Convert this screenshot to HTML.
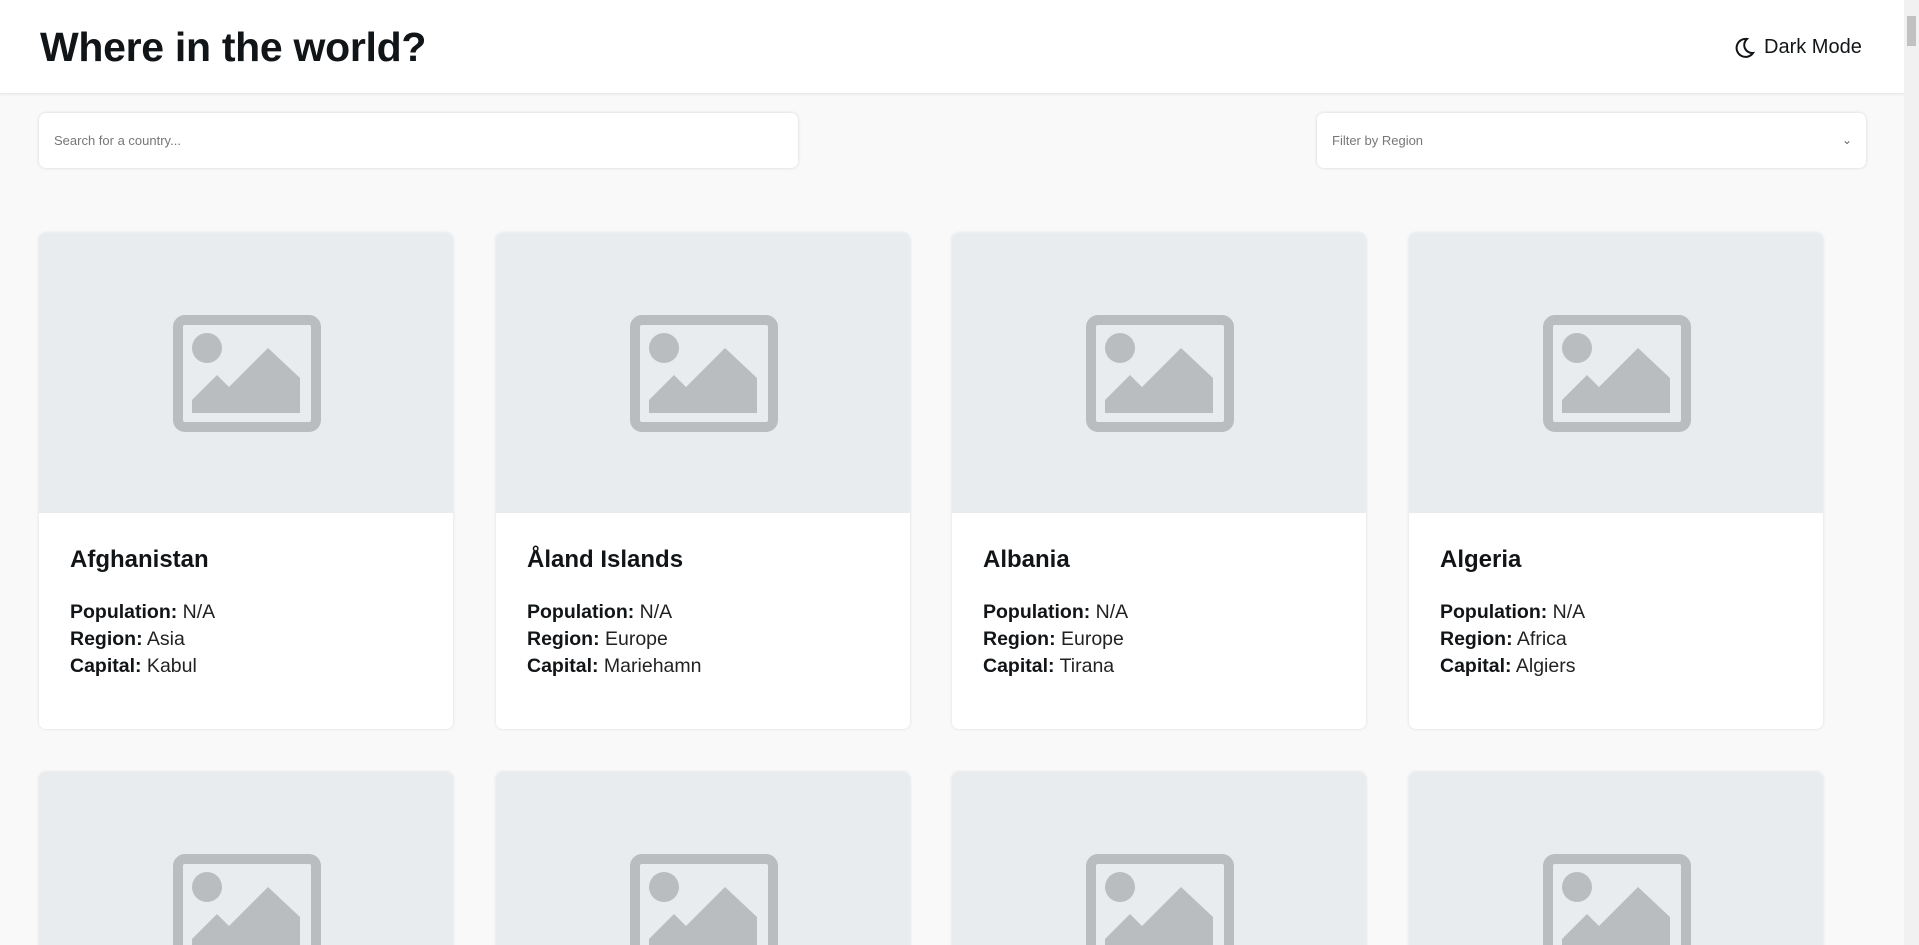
<!DOCTYPE html>
<html><head><meta charset="utf-8"><style>
*{box-sizing:border-box;margin:0;padding:0}
html,body{width:1919px;height:945px;overflow:hidden}
body{background:#f9f9f9;font-family:"Liberation Sans",sans-serif;color:#111517;position:relative}
.sb{position:absolute;right:0;top:0;width:15px;height:945px;background:#f1f1f1}
.sb div{position:absolute;left:3px;top:16px;width:9px;height:30px;background:#c1c1c1}
header{position:absolute;left:0;top:0;width:1904px;height:93px;background:#fff;box-shadow:0 1px 3px rgba(0,0,0,.1)}
h1{position:absolute;left:40px;top:24px;font-size:41px;font-weight:bold;letter-spacing:-.3px}
.dm{position:absolute;left:1735px;top:36px;font-size:20px;display:flex;align-items:center;gap:9px}
.inp{position:absolute;top:113px;height:55px;background:#fff;border-radius:7px;box-shadow:0 0 3px rgba(0,0,0,.15);font-size:13px;color:#777;padding-left:15px;line-height:55px}
.card{position:absolute;width:414px;height:496px;background:#fff;border-radius:7px;overflow:hidden;box-shadow:0 0 3px rgba(0,0,0,.12)}
.img{height:280px;background:#e8ecef;position:relative}
.img svg{position:absolute;left:134px;top:82px}
.card h2{position:absolute;left:31px;top:313px;font-size:24px;font-weight:bold}
.info{position:absolute;left:31px;top:366px;font-size:19.5px;line-height:27px;color:#222}
.info b{color:#111517}
</style></head><body>
<header><h1>Where in the world?</h1>
<div class="dm"><svg width="20" height="22" viewBox="0 0 20 22"><path d="M12 2 A9 9 0 1 0 18 16 A8 8 0 0 1 12 2 Z" fill="none" stroke="#111517" stroke-width="2"/></svg><span>Dark Mode</span></div></header>
<div class="inp" style="left:39px;width:759px">Search for a country...</div>
<div class="inp" style="left:1317px;width:549px">Filter by Region<span style="position:absolute;right:14px;top:0;color:#666;font-size:12px">&#8964;</span></div>

<div class="card" style="left:39px;top:233px"><div class="img"><svg width="148" height="117" viewBox="0 0 148 117"><rect x="5" y="5" width="138" height="107" rx="7" fill="none" stroke="#babdc0" stroke-width="10"/><circle cx="34" cy="33" r="15" fill="#babdc0"/><path d="M19 85 L44 60 L56 72 L95 33 L127 63 L127 98 L19 98 Z" fill="#babdc0"/></svg></div><h2>Afghanistan</h2><div class="info"><b>Population:</b> N/A<br><b>Region:</b> Asia<br><b>Capital:</b> Kabul</div></div>
<div class="card" style="left:496px;top:233px"><div class="img"><svg width="148" height="117" viewBox="0 0 148 117"><rect x="5" y="5" width="138" height="107" rx="7" fill="none" stroke="#babdc0" stroke-width="10"/><circle cx="34" cy="33" r="15" fill="#babdc0"/><path d="M19 85 L44 60 L56 72 L95 33 L127 63 L127 98 L19 98 Z" fill="#babdc0"/></svg></div><h2>Åland Islands</h2><div class="info"><b>Population:</b> N/A<br><b>Region:</b> Europe<br><b>Capital:</b> Mariehamn</div></div>
<div class="card" style="left:952px;top:233px"><div class="img"><svg width="148" height="117" viewBox="0 0 148 117"><rect x="5" y="5" width="138" height="107" rx="7" fill="none" stroke="#babdc0" stroke-width="10"/><circle cx="34" cy="33" r="15" fill="#babdc0"/><path d="M19 85 L44 60 L56 72 L95 33 L127 63 L127 98 L19 98 Z" fill="#babdc0"/></svg></div><h2>Albania</h2><div class="info"><b>Population:</b> N/A<br><b>Region:</b> Europe<br><b>Capital:</b> Tirana</div></div>
<div class="card" style="left:1409px;top:233px"><div class="img"><svg width="148" height="117" viewBox="0 0 148 117"><rect x="5" y="5" width="138" height="107" rx="7" fill="none" stroke="#babdc0" stroke-width="10"/><circle cx="34" cy="33" r="15" fill="#babdc0"/><path d="M19 85 L44 60 L56 72 L95 33 L127 63 L127 98 L19 98 Z" fill="#babdc0"/></svg></div><h2>Algeria</h2><div class="info"><b>Population:</b> N/A<br><b>Region:</b> Africa<br><b>Capital:</b> Algiers</div></div>

<div class="card" style="left:39px;top:772px"><div class="img"><svg width="148" height="117" viewBox="0 0 148 117"><rect x="5" y="5" width="138" height="107" rx="7" fill="none" stroke="#babdc0" stroke-width="10"/><circle cx="34" cy="33" r="15" fill="#babdc0"/><path d="M19 85 L44 60 L56 72 L95 33 L127 63 L127 98 L19 98 Z" fill="#babdc0"/></svg></div></div>
<div class="card" style="left:496px;top:772px"><div class="img"><svg width="148" height="117" viewBox="0 0 148 117"><rect x="5" y="5" width="138" height="107" rx="7" fill="none" stroke="#babdc0" stroke-width="10"/><circle cx="34" cy="33" r="15" fill="#babdc0"/><path d="M19 85 L44 60 L56 72 L95 33 L127 63 L127 98 L19 98 Z" fill="#babdc0"/></svg></div></div>
<div class="card" style="left:952px;top:772px"><div class="img"><svg width="148" height="117" viewBox="0 0 148 117"><rect x="5" y="5" width="138" height="107" rx="7" fill="none" stroke="#babdc0" stroke-width="10"/><circle cx="34" cy="33" r="15" fill="#babdc0"/><path d="M19 85 L44 60 L56 72 L95 33 L127 63 L127 98 L19 98 Z" fill="#babdc0"/></svg></div></div>
<div class="card" style="left:1409px;top:772px"><div class="img"><svg width="148" height="117" viewBox="0 0 148 117"><rect x="5" y="5" width="138" height="107" rx="7" fill="none" stroke="#babdc0" stroke-width="10"/><circle cx="34" cy="33" r="15" fill="#babdc0"/><path d="M19 85 L44 60 L56 72 L95 33 L127 63 L127 98 L19 98 Z" fill="#babdc0"/></svg></div></div>
<div class="sb"><div></div></div>
</body></html>
